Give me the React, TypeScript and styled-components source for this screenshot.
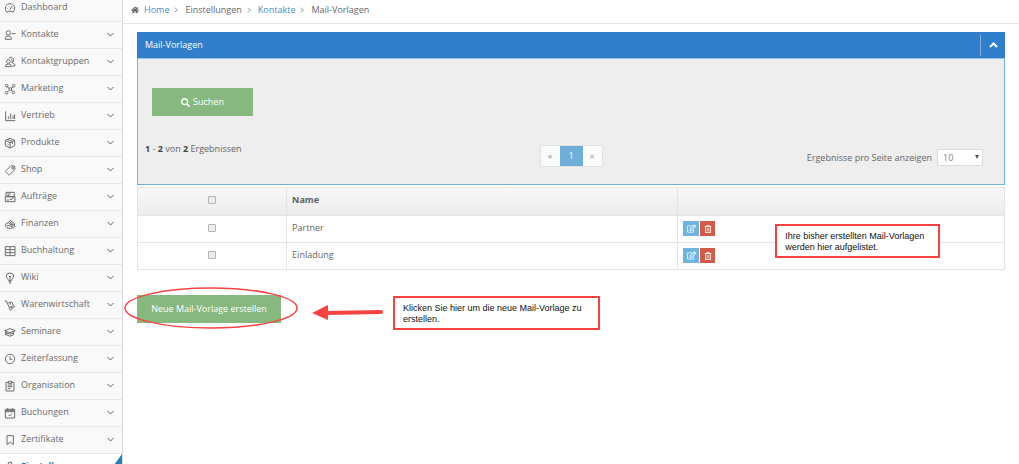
import React from "react";
import styled, { createGlobalStyle } from "styled-components";
import { FaHome, FaRegEdit, FaRegTrashAlt, FaSearch } from "react-icons/fa";

const GlobalStyle = createGlobalStyle`
  *, *::before, *::after { box-sizing: border-box; }
  body {
    margin: 0;
    background: #fff;
    color: #666;
    font-family: "Open Sans", sans-serif;
    font-size: 9px;
    line-height: 14px;
  }
  button, select, input { font: inherit; margin: 0; }
  a { color: #3f8fca; text-decoration: none; }
`;

const Page = styled.div`
  display: flex;
  height: 100vh;
  overflow: hidden;
`;

const Sidebar = styled.nav`
  flex: 0 0 123px;
  overflow: hidden;
  background: #f9f9f9;
  border-right: 1px solid #dcdcdc;
`;

const Menu = styled.ul`
  list-style: none;
  margin: -5px 0 0;
  padding: 0;
`;

const MenuItem = styled.li`
  height: 27px;
  border-bottom: 1px solid #e8e8e8;
`;

const MenuLink = styled.a<{ $active?: boolean }>`
  position: relative;
  display: flex;
  align-items: center;
  gap: 5px;
  height: 26px;
  padding: 0 8px 2px 4px;
  color: ${(p) => (p.$active ? "#2b7dbc" : "#6b6b6b")};
  font-weight: ${(p) => (p.$active ? 700 : 400)};
  background: ${(p) => (p.$active ? "#fff" : "transparent")};
`;

const MenuIcon = styled.svg`
  flex: none;
  width: 12px;
  height: 12px;
  margin-top: 2px;
  fill: none;
  stroke: #6c6c6c;
  stroke-width: 3;
  stroke-linejoin: round;
`;

const MenuLabel = styled.span`
  flex: 1;
`;

const Chevron = styled.svg`
  width: 7px;
  height: 5px;
  fill: none;
  stroke: #666;
`;

const ActiveCorner = styled.svg`
  position: absolute;
  right: 0;
  top: 0;
  width: 8px;
  height: 26px;
  fill: #2b7dbc;
`;

const Main = styled.main`
  flex: 1;
  min-width: 0;
`;

const Breadcrumbs = styled.ol`
  display: flex;
  align-items: center;
  list-style: none;
  margin: 0;
  height: 24px;
  padding: 0 8px 3px;
  border-bottom: 1px solid #e5e5e5;
`;

const Crumb = styled.li`
  display: flex;
  align-items: center;
  gap: 5px;

  & + &::before {
    content: "";
    width: 4px;
    height: 4px;
    margin: 0 3px 0 4px;
    border: solid #b2b6bf;
    border-width: 1px 1px 0 0;
    transform: rotate(45deg);
  }
`;

const Content = styled.div`
  position: relative;
  padding: 8px 14px 0;
`;

const Panel = styled.section`
  border: 1px solid #6fb3e0;
  background: #eee;
`;

const PanelHeader = styled.header`
  display: flex;
  align-items: center;
  justify-content: space-between;
  height: 27px;
  margin: -1px -1px 0;
  padding-left: 8px;
  background: #307ecc;
  border-bottom: 1px solid #91c0ea;
  color: #fff;
`;

const PanelTitle = styled.h1`
  margin: 0;
  font-size: 9px;
  font-weight: 400;
`;

const CollapseButton = styled.button`
  display: flex;
  align-items: center;
  justify-content: center;
  width: 25px;
  height: 21px;
  padding: 0;
  border: 0;
  border-left: 1px solid #83b2e0;
  background: none;
`;

const PanelBody = styled.div`
  padding: 29px 14px 17px;
`;

const GreenButton = styled.button<{ $width: number }>`
  display: flex;
  align-items: center;
  justify-content: center;
  gap: 3px;
  width: ${(p) => p.$width}px;
  height: 28px;
  padding: 0;
  border: 0;
  background: #87b87f;
  color: #fff;
  white-space: nowrap;
`;

const ResultBar = styled.div`
  display: grid;
  grid-template-columns: 1fr auto 1fr;
  align-items: start;
  margin: 26px -7px 0;
`;

const ResultCount = styled.p`
  margin: 0;

  b { color: #444; }
`;

const Pagination = styled.div`
  display: flex;
  margin-top: 3px;
  border: 1px solid #e2e2e2;
`;

const PageButton = styled.button<{ $current?: boolean }>`
  width: ${(p) => (p.$current ? 23 : 19)}px;
  height: 20px;
  padding: 0;
  border: 0;
  background: ${(p) => (p.$current ? "#6faed9" : "#fafafa")};
  color: ${(p) => (p.$current ? "#fff" : "#999")};
`;

const PageSize = styled.label`
  display: flex;
  align-items: center;
  justify-content: flex-end;
  gap: 5px;
  padding: 7px 14px 0 0;
`;

const SelectBox = styled.span`
  position: relative;
  display: flex;
`;

const Select = styled.select`
  appearance: none;
  width: 46px;
  height: 17px;
  padding: 0 5px;
  border: 1px solid #ddd;
  border-radius: 0;
  background: #fff;
  color: #858585;
`;

const SelectArrow = styled.svg`
  position: absolute;
  right: 4px;
  top: 6px;
  width: 4px;
  height: 4px;
  fill: #555;
  pointer-events: none;
`;

const Table = styled.table`
  width: 100%;
  margin-top: 2px;
  table-layout: fixed;
  border-collapse: collapse;
  border: 1px solid #e0e0e0;
`;

const HeadRow = styled.tr`
  height: 28px;
  background: linear-gradient(#f8f8f8, #ececec);
`;

const Row = styled.tr`
  height: 27px;
`;

const cell = `
  padding: 0 5px 3px;
  border: 1px solid #e4e4e4;
  text-align: left;
  vertical-align: middle;
`;

const HeadCell = styled.th<{ $width: string }>`
  ${cell}
  width: ${(p) => p.$width};
  color: #606060;
`;

const Cell = styled.td`
  ${cell}
`;

const Checkbox = styled.input`
  appearance: none;
  display: block;
  width: 8px;
  height: 8px;
  margin: 0 auto;
  border: 1px solid #b4b4b4;
  border-radius: 1px;
  background: #ececec;
`;

const Actions = styled.div`
  display: flex;
  gap: 1px;
  padding-top: 2px;
`;

const ActionButton = styled.button<{ $danger?: boolean }>`
  display: flex;
  align-items: center;
  justify-content: center;
  width: ${(p) => (p.$danger ? 15 : 16)}px;
  height: 15px;
  padding: 0;
  border: 0;
  background: ${(p) => (p.$danger ? "#d15b47" : "#6fb3e0")};
  color: #fff;
`;

const CreateArea = styled.div`
  position: relative;
  margin-top: 25px;
`;

const Marker = styled.svg`
  position: absolute;
  left: -13px;
  top: -8px;
  width: 260px;
  height: 42px;
  pointer-events: none;
`;

const Note = styled.p<{ $left: string; $top: number; $width: number }>`
  position: absolute;
  left: ${(p) => p.$left};
  top: ${(p) => p.$top}px;
  width: ${(p) => p.$width}px;
  margin: 0;
  padding: 5px 0 3px 8px;
  border: 2px solid #f94343;
  background: #fff;
  color: #111;
  font-family: "Liberation Sans", sans-serif;
  font-size: 9px;
  line-height: 11px;
  white-space: nowrap;
`;

const icons: Record<string, React.ReactNode> = {
  Dashboard: (
    <path d="M9 31C-1 20 5 5 18 5s19 15 9 26l-4-3H13zM9 19h2M13 12l1 1M24 12l-7 11M26 19h2" />
  ),
  Kontakte: (
    <path d="M13 5a6 6 0 1 1 0 13a6 6 0 1 1 0-13M4 31v-5q0-5 9-5t9 5v5zM23 14h12" />
  ),
  Kontaktgruppen: (
    <path d="M13 11a5 5 0 1 1 0 11a5 5 0 1 1 0-11M4 32q0-8 9-8t9 8zM14 7q4-5 9-3c8 3 7 12 1 16 6 1 9 4 9 10h-8M20 9q8 2 3 11" />
  ),
  Marketing: (
    <path d="M8 4a4 4 0 1 1 0 8a4 4 0 1 1 0-8M29 4a4 4 0 1 1 0 8a4 4 0 1 1 0-8M8 25a4 4 0 1 1 0 8a4 4 0 1 1 0-8M28 24a4 4 0 1 1 0 8a4 4 0 1 1 0-8M19 14a4 4 0 1 1 0 8a4 4 0 1 1 0-8M10 12l6 4M27 12l-5 4M16 21l-5 5M22 21l3 4" />
  ),
  Vertrieb: <path d="M5 4v28h29M13 27V19M20 27V11M27 27V16M32 27V13" />,
  Produkte: (
    <path d="M18 4l14 6v16l-14 7-14-7V10zM4 10l14 7 14-7M18 17v16M11 7l14 7v7M10 21l4 2" />
  ),
  Shop: (
    <path d="M21 5l11 1 1 10-16 16q-3 2-5-1l-6-6q-3-3 0-5zM26 9a3 3 0 1 1 0 6a3 3 0 1 1 0-6" />
  ),
  Aufträge: <path d="M6 4h25v13H6zM4 17h29v15H4zM10 9h10M10 13h6M17 23l4 4 8-9M8 27h7" />,
  Finanzen: (
    <path d="M4 22q1-8 9-8l5-7 14 10-2 8M4 22q0 9 15 9 13 0 14-6-2-7-14-7M13 14l14 11M18 12l9 8M8 23q8-4 17 4" />
  ),
  Buchhaltung: <path d="M4 5h29v27H4zM18 5v27M4 14h29M4 23h29" />,
  Wiki: (
    <path d="M13 25c0-5-6-7-6-13a11 9 0 0 1 22 0c0 6-6 8-6 13zM14 29h8M15 33h6M18 23V13M14 11l4 4 4-4" />
  ),
  Warenwirtschaft: (
    <path d="M2 6h5l9 20M13 12l10-3 6 11-12 5M18 11l2 6M20 25a4 4 0 1 1 0 8a4 4 0 1 1 0-8M24 27l10-5" />
  ),
  Seminare: (
    <path d="M2 14l16-6 16 6-16 6zM8 18v9q10 7 20 0v-9M8 21q10 7 20 0M5 16v12" />
  ),
  Zeiterfassung: <path d="M18 4a14 14 0 1 1 0 28a14 14 0 1 1 0-28M18 10v9h7" />,
  Organisation: (
    <path d="M13 7H6v26h24V7h-7M13 4h10v6H13zM11 15h14M11 20h14M11 26h9" />
  ),
  Buchungen: <path d="M4 7h28v26H4zM4 14h28M4 11h28M11 3v7M25 3v7M13 23l4 4 7-8" />,
  Zertifikate: <path d="M9 5h19v27l-9-8-10 8z" />,
  Einstellungen: (
    <path d="M14 4h8l1 5 5 2 4 6-3 4 2 5-6 5-7-2-7 2-6-5 2-5-3-4 4-6 5-2zM18 13a5 5 0 1 1 0 10a5 5 0 1 1 0-10" />
  ),
};

const entries = Object.keys(icons);
const templates = ["Partner", "Einladung"];

export default function App() {
  return (
    <>
      <GlobalStyle />
      <Page>
        <Sidebar aria-label="Hauptmenü">
          <Menu>
            {entries.map((name) => {
              const active = name === "Einstellungen";
              return (
                <MenuItem key={name}>
                  <MenuLink href="#" $active={active}>
                    <MenuIcon viewBox="0 0 36 36">{icons[name]}</MenuIcon>
                    <MenuLabel>{name}</MenuLabel>
                    {name !== "Dashboard" && (
                      <Chevron viewBox="0 0 7 5">
                        <path d="M.5 1l3 3 3-3" />
                      </Chevron>
                    )}
                    {active && (
                      <ActiveCorner viewBox="0 0 8 26">
                        <path d="M8 0v26L0 11z" />
                      </ActiveCorner>
                    )}
                  </MenuLink>
                </MenuItem>
              );
            })}
          </Menu>
        </Sidebar>

        <Main>
          <Breadcrumbs>
            <Crumb>
              <FaHome size={8} />
              <a href="#">Home</a>
            </Crumb>
            <Crumb>Einstellungen</Crumb>
            <Crumb>
              <a href="#">Kontakte</a>
            </Crumb>
            <Crumb>Mail-Vorlagen</Crumb>
          </Breadcrumbs>

          <Content>
            <Panel>
              <PanelHeader>
                <PanelTitle>Mail-Vorlagen</PanelTitle>
                <CollapseButton aria-label="Einklappen">
                  <svg width="9" height="6" viewBox="0 0 9 6" fill="none" stroke="#fff" strokeWidth="2">
                    <path d="M1 5l3.500-3.500L8 5" />
                  </svg>
                </CollapseButton>
              </PanelHeader>
              <PanelBody>
                <GreenButton $width={101}>
                  <FaSearch size={9} />
                  Suchen
                </GreenButton>
                <ResultBar>
                  <ResultCount>
                    <b>1</b> - <b>2</b> von <b>2</b> Ergebnissen
                  </ResultCount>
                  <Pagination>
                    <PageButton aria-label="Zurück">«</PageButton>
                    <PageButton $current>1</PageButton>
                    <PageButton aria-label="Weiter">»</PageButton>
                  </Pagination>
                  <PageSize>
                    Ergebnisse pro Seite anzeigen
                    <SelectBox>
                      <Select defaultValue="10">
                        <option>10</option>
                        <option>25</option>
                      </Select>
                      <SelectArrow viewBox="0 0 4 4">
                        <path d="M0 0h4L2 4z" />
                      </SelectArrow>
                    </SelectBox>
                  </PageSize>
                </ResultBar>
              </PanelBody>
            </Panel>

            <Table>
              <thead>
                <HeadRow>
                  <HeadCell $width="17.2%">
                    <Checkbox type="checkbox" aria-label="Alle auswählen" />
                  </HeadCell>
                  <HeadCell $width="45.1%">Name</HeadCell>
                  <HeadCell $width="37.7%" aria-label="Aktionen" />
                </HeadRow>
              </thead>
              <tbody>
                {templates.map((name) => (
                  <Row key={name}>
                    <Cell>
                      <Checkbox type="checkbox" aria-label={name} />
                    </Cell>
                    <Cell>{name}</Cell>
                    <Cell>
                      <Actions>
                        <ActionButton aria-label="Bearbeiten">
                          <FaRegEdit size={9} />
                        </ActionButton>
                        <ActionButton $danger aria-label="Löschen">
                          <FaRegTrashAlt size={8} />
                        </ActionButton>
                      </Actions>
                    </Cell>
                  </Row>
                ))}
              </tbody>
            </Table>

            <CreateArea>
              <GreenButton $width={144}>Neue Mail-Vorlage erstellen</GreenButton>
              <Marker viewBox="0 0 260 42" fill="none" stroke="#f94343">
                <ellipse cx="87" cy="21" rx="86" ry="20" strokeWidth="1.500" />
                <path d="M257 25l-55 1" strokeWidth="4" strokeLinecap="round" />
                <path d="M188 26l16-8v15z" fill="#f94343" stroke="none" />
              </Marker>
              <Note $left="256px" $top={1} $width={207}>
                Klicken Sie hier um die neue Mail-Vorlage zu
                <br />
                erstellen.
              </Note>
            </CreateArea>

            <Note $left="72.8%" $top={200} $width={165}>
              Ihre bisher erstellten Mail-Vorlagen
              <br />
              werden hier aufgelistet.
            </Note>
          </Content>
        </Main>
      </Page>
    </>
  );
}
